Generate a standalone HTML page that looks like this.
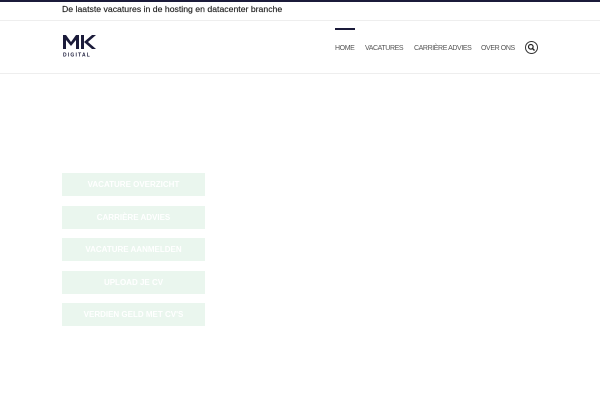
<!DOCTYPE html>
<html><head><style>
body{margin:0;width:600px;height:400px;background:#fff;font-family:"Liberation Sans",sans-serif;position:relative;overflow:hidden}
.top{position:absolute;top:0;left:0;width:600px;height:2px;background:#1b1b3a}
.tb{position:absolute;top:0;left:0;width:600px;height:20px;border-bottom:1px solid #eee}
.tt{position:absolute;left:62px;top:4px;font-size:8.7px;color:#222;font-weight:500;-webkit-text-stroke:0.15px #222}
.hdr{position:absolute;top:73px;left:0;width:600px;border-top:1px solid #eee}
.nav{position:absolute;top:45px;font-size:7px;color:#555;letter-spacing:-0.4px}
.btn{position:absolute;left:62px;width:143px;height:23px;background:#eaf6ee;color:#fff;font-size:8px;font-weight:bold;text-align:center;line-height:23px}
</style></head><body>
<div class="tb"></div><div class="top"></div>
<div class="tt">De laatste vacatures in de hosting en datacenter branche</div>
<svg style="position:absolute;left:62px;top:33px" width="36" height="25" viewBox="0 0 36 25">
<path d="M1 16V2h3l5 7 5-7h3v14h-3V7l-5 6-5-6v9z" fill="#1b1b3a"/>
<path d="M19 2h3v14h-3zM22 9l8-7h4l-8 7 8 7h-4z" fill="#1b1b3a"/>
<text x="1" y="23.5" font-size="5" font-weight="bold" fill="#1b1b3a" letter-spacing="1.2" font-family="Liberation Sans">DIGITAL</text>
</svg>
<div style="position:absolute;left:335px;top:28px;width:20px;height:2px;background:#1b1b3a"></div>
<div class="nav" style="left:335px">HOME</div>
<div class="nav" style="left:365px">VACATURES</div>
<div class="nav" style="left:414px">CARRIÈRE ADVIES</div>
<div class="nav" style="left:481px">OVER ONS</div>
<div style="position:absolute;left:525px;top:41px;width:11px;height:11px;border:1px solid #333;border-radius:50%"></div>
<svg style="position:absolute;left:527px;top:43px" width="9" height="9"><circle cx="3.8" cy="3.8" r="2.3" fill="none" stroke="#222" stroke-width="1.2"/><path d="M5.5 5.5L7.5 7.5" stroke="#222" stroke-width="1.4"/></svg>
<div class="hdr"></div>
<div class="btn" style="top:173px">VACATURE OVERZICHT</div>
<div class="btn" style="top:206px">CARRIÈRE ADVIES</div>
<div class="btn" style="top:238px">VACATURE AANMELDEN</div>
<div class="btn" style="top:271px">UPLOAD JE CV</div>
<div class="btn" style="top:303px">VERDIEN GELD MET CV'S</div>
</body></html>
